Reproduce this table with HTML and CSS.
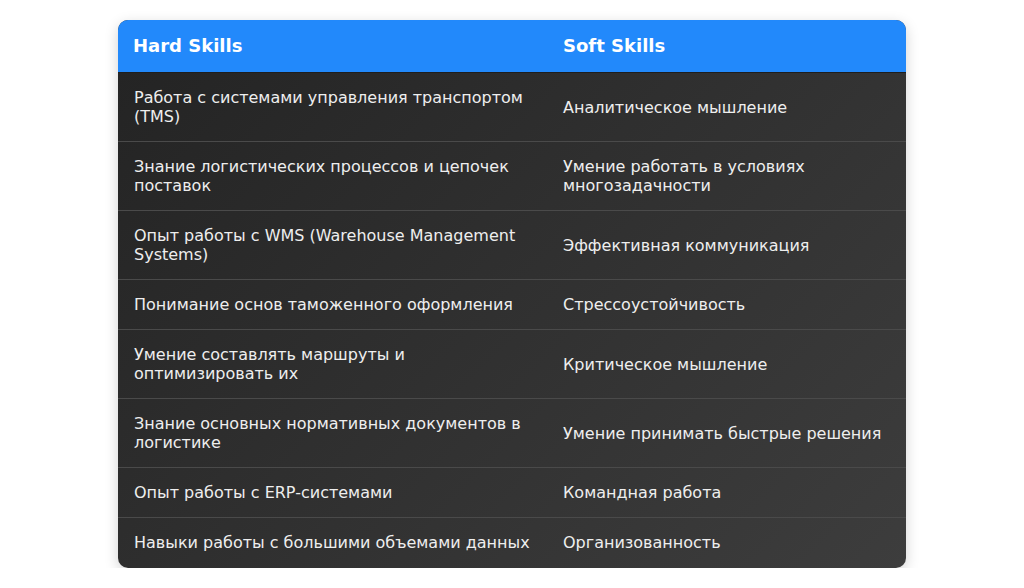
FILE: index.html
```html
<!DOCTYPE html>
<html lang="ru">
<head>
<meta charset="utf-8">
<link rel="stylesheet" href="styles.css">
</head>
<body>
<div class="card">
  <table class="skills">
    <thead>
      <tr><th class="c1">Hard Skills</th><th class="c2">Soft Skills</th></tr>
    </thead>
    <tbody>
      <tr><td>Работа с системами управления транспортом (TMS)</td><td>Аналитическое мышление</td></tr>
      <tr><td>Знание логистических процессов и цепочек поставок</td><td>Умение работать в условиях многозадачности</td></tr>
      <tr><td>Опыт работы с WMS (Warehouse Management Systems)</td><td>Эффективная коммуникация</td></tr>
      <tr><td>Понимание основ таможенного оформления</td><td>Стрессоустойчивость</td></tr>
      <tr><td>Умение составлять маршруты и оптимизировать их</td><td>Критическое мышление</td></tr>
      <tr><td>Знание основных нормативных документов в логистике</td><td>Умение принимать быстрые решения</td></tr>
      <tr><td>Опыт работы с ERP-системами</td><td>Командная работа</td></tr>
      <tr><td>Навыки работы с большими объемами данных</td><td>Организованность</td></tr>
    </tbody>
  </table>
</div>
</body>
</html>
```

FILE: styles.css
```css
html, body {
  margin: 0;
  padding: 0;
  background: #ffffff;
}
body {
  font-family: "DejaVu Sans", sans-serif;
  padding: 20px 0 0 118px;
}
.card {
  width: 788px;
  border-radius: 10px;
  overflow: hidden;
  background: linear-gradient(135deg, #232323 0%, #303030 50%, #3d3d3d 100%);
  box-shadow: 0 4px 14px rgba(0, 0, 0, 0.18);
}
.skills {
  width: 100%;
  border-collapse: collapse;
  table-layout: fixed;
}
.skills th {
  background: #2289fb;
  color: #ffffff;
  font-size: 18px;
  font-weight: bold;
  line-height: 22px;
  text-align: left;
  padding: 15px 16px 15px 15px;
  border-bottom: 1px solid #1e1e1e;
}
.skills th.c1 { width: 398px; }
.skills th.c2 { padding-left: 16px; }
.skills td {
  color: #eeeeee;
  font-size: 16px;
  line-height: 19px;
  padding: 15px 16px;
  vertical-align: middle;
  border-bottom: 1px solid #4a4a4a;
}
.skills tbody tr:last-child td { border-bottom-color: transparent; }
```
